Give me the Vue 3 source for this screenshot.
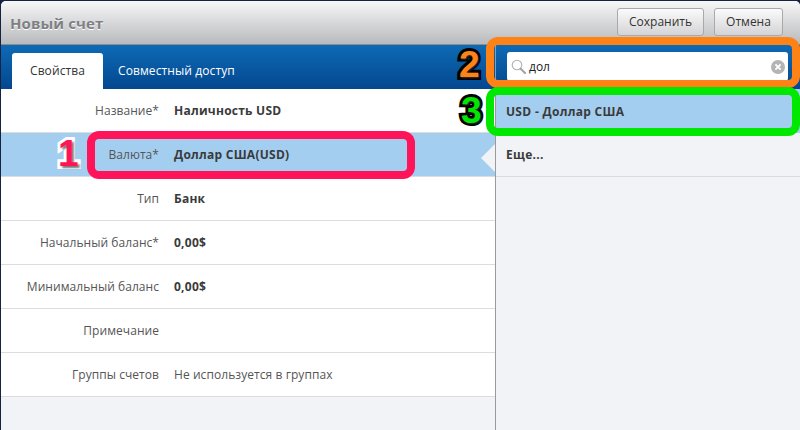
<template>
  <div class="page">
    <div class="window">
      <header class="top">
        <h1>Новый счет</h1>
        <div class="actions">
          <button class="btn save">Сохранить</button>
          <button class="btn cancel">Отмена</button>
        </div>
      </header>
      <div class="body">
        <section class="left">
          <nav class="tabs">
            <div class="tab active">Свойства</div>
            <div class="tab">Совместный доступ</div>
          </nav>
          <div class="rows">
            <div v-for="r in rows" :key="r.label" class="row" :class="{ selected: r.selected }">
              <span class="label">{{ r.label }}</span>
              <span class="value" :class="{ plain: r.plain }">{{ r.value }}</span>
            </div>
          </div>
          <div class="notch"></div>
        </section>
        <aside class="right">
          <div class="searchbar">
            <div class="search">
              <svg class="mag" width="15" height="15" viewBox="0 0 15 15" fill="none">
                <circle cx="6" cy="6" r="4.8" stroke="#b0b0b0" stroke-width="1.1" />
                <path d="M9.6 9.6l4.4 4.4" stroke="#a0a0a0" stroke-width="2" stroke-linecap="round" />
              </svg>
              <span class="q">дол</span>
              <svg class="clear" width="14" height="14" viewBox="0 0 14 14">
                <circle cx="7" cy="7" r="7" fill="#b4b4b4" />
                <path d="M4.4 4.4l5.2 5.2M9.6 4.4l-5.2 5.2" stroke="#fff" stroke-width="1.8" />
              </svg>
            </div>
          </div>
          <div class="opt hit">USD - Доллар США</div>
          <div class="opt">Еще...</div>
        </aside>
      </div>
    </div>
    <div class="mark pink"></div>
    <div class="mark orange"></div>
    <div class="mark green"></div>
    <span class="num n1">1</span>
    <span class="num n2">2</span>
    <span class="num n3">3</span>
  </div>
</template>

<script setup>
const rows = [
  { label: 'Название*', value: 'Наличность USD' },
  { label: 'Валюта*', value: 'Доллар США(USD)', selected: true },
  { label: 'Тип', value: 'Банк' },
  { label: 'Начальный баланс*', value: '0,00$' },
  { label: 'Минимальный баланс', value: '0,00$' },
  { label: 'Примечание', value: '' },
  { label: 'Группы счетов', value: 'Не используется в группах', plain: true }
]
</script>

<style>
html, body { margin: 0; background: #14233f; }
</style>

<style scoped>
.page {
  position: relative;
  width: 800px;
  height: 430px;
  overflow: hidden;
  background: #14233f;
  font-family: "Open Sans", "Liberation Sans", sans-serif;
  color: #3a3a3a;
}
.window {
  margin: 1px 0 0 1px;
  height: 429px;
  border-radius: 5px 5px 0 0;
  overflow: hidden;
  display: flex;
  flex-direction: column;
  background: #f2f3f6;
}
.top {
  height: 44px;
  flex: none;
  box-sizing: border-box;
  border-bottom: 1px solid #8d8d8f;
  background: linear-gradient(#f7f7f7, #b9babd);
  display: flex;
  align-items: center;
  justify-content: space-between;
  padding: 0 17px 0 9px;
}
h1 {
  margin: 0;
  font-size: 15px;
  font-weight: 700;
  letter-spacing: 0.1px;
  color: #808084;
  text-shadow: 0 1px 0 #fff;
}
.actions { display: flex; gap: 10px; position: relative; top: -1px; }
.btn {
  height: 28px;
  box-sizing: border-box;
  padding: 0;
  border: 1px solid #a9a9a9;
  border-radius: 3px;
  background: linear-gradient(#fbfbfb, #d4d4d6);
  font: 400 12px "Open Sans", sans-serif;
  color: #333;
}
.save { width: 87px; }
.cancel { width: 69px; }
.body { flex: 1; display: flex; min-height: 0; }
.left { position: relative; width: 494px; flex: none; }
.tabs {
  height: 44px;
  box-sizing: border-box;
  background: linear-gradient(#0e6ab5, #03478f);
  display: flex;
  align-items: flex-end;
  padding-left: 11px;
}
.tab {
  height: 36px;
  line-height: 36px;
  font-size: 12px;
  letter-spacing: 0.1px;
  color: #fff;
  padding: 0 15px;
}
.tab.active {
  width: 91px;
  box-sizing: border-box;
  padding: 0;
  text-align: center;
  background: #fff;
  color: #333;
  border-radius: 3px 3px 0 0;
}
.rows { background: #fff; }
.row {
  height: 44px;
  box-sizing: border-box;
  border-bottom: 1px solid #dcdcdc;
  display: flex;
  align-items: center;
  font-size: 12px;
  letter-spacing: 0.05px;
}
.row.selected { background: #a4cef0; }
.label {
  width: 158px;
  flex: none;
  text-align: right;
  color: #555;
}
.value {
  margin-left: 15px;
  font-weight: 700;
  letter-spacing: 0.25px;
  color: #3a3a3a;
}
.value.plain { font-weight: 400; letter-spacing: 0.07px; color: #555; }
.notch {
  position: absolute;
  right: 0;
  top: 99px;
  width: 0;
  height: 0;
  border-style: solid;
  border-width: 14px 14px 14px 0;
  border-color: transparent #f2f3f6 transparent transparent;
}
.right {
  flex: 1;
  border-left: 1px solid #9a9a9c;
  min-width: 0;
}
.searchbar {
  height: 44px;
  box-sizing: border-box;
  background: linear-gradient(#0e6ab5, #03478f);
  padding: 7px 12px 0 11px;
}
.search {
  height: 29px;
  background: #fff;
  border-radius: 3px;
  display: flex;
  align-items: center;
  padding: 0 3px 0 4px;
  font-size: 12px;
  color: #222;
}
.q { margin-left: 3px; flex: 1; }
.opt {
  height: 44px;
  box-sizing: border-box;
  border-bottom: 1px solid #dcdcdc;
  display: flex;
  align-items: center;
  padding-left: 10px;
  font-size: 12px;
  font-weight: 700;
  letter-spacing: 0.3px;
  color: #3a3a3a;
}
.opt.hit { background: #a4cef0; border-bottom: 0; }
.mark {
  position: absolute;
  box-sizing: border-box;
  border-radius: 12px;
  border-style: solid;
  border-width: 8px;
}
.pink { left: 87px; top: 131px; width: 328px; height: 48px; border-color: #ff1359; }
.orange { left: 486px; top: 37px; width: 314px; height: 51px; border-color: #ff8216; }
.green { left: 486px; top: 87px; width: 314px; height: 49px; border-color: #00e800; }
.num {
  position: absolute;
  font-family: "Liberation Sans", sans-serif;
  font-weight: 700;
  font-size: 37px;
  line-height: 37px;
  -webkit-text-stroke: 6px #000;
  paint-order: stroke fill;
  text-shadow: 1px 1px 2px #333;
}
.n1 { left: 58px; top: 135px; color: #ff1359; -webkit-text-stroke-color: #fff; text-shadow: 2px 2px 2px #777; }
.n2 { left: 459px; top: 46px; color: #ff8216; }
.n3 { left: 461px; top: 92px; color: #00e800; }
</style>
